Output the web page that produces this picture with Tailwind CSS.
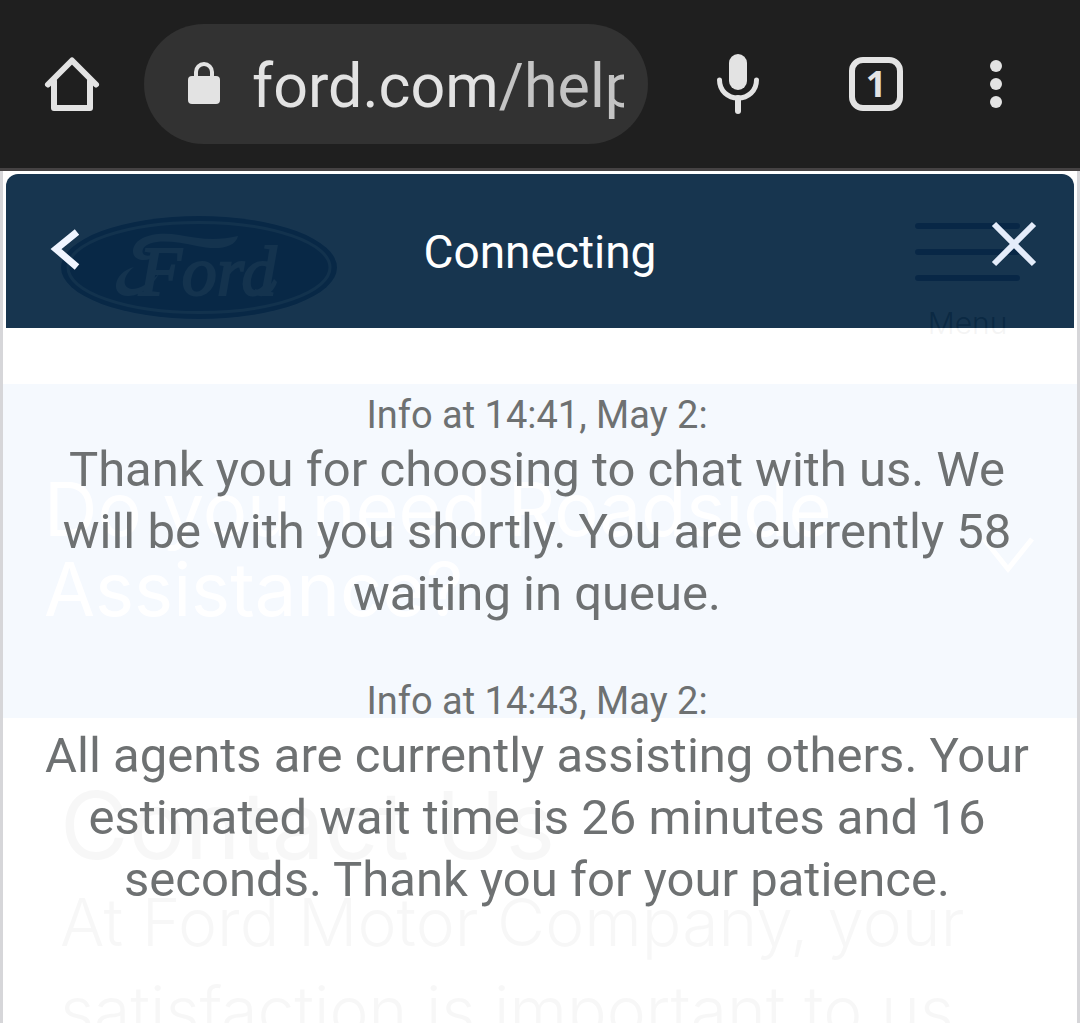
<!DOCTYPE html>
<html lang="en">
<head>
  <meta charset="UTF-8">
  <meta name="viewport" content="width=device-width, initial-scale=1.0">
  <title>Ford Help - Chat</title>
  <script src="https://cdn.jsdelivr.net/npm/@tailwindcss/browser@4"></script>
</head>
<body class="h-screen flex flex-col overflow-hidden bg-white font-['Roboto',sans-serif]">

<!-- Browser Bar -->
<header class="shrink-0 flex items-center h-[171px] pl-9 pr-15 bg-[#1f1f1f] border-b-3 border-[#454243] text-[#e3e3e3]">
  <button aria-label="Home" class="shrink-0">
    <svg class="size-18" viewBox="0 0 72 72" fill="none" stroke="currentColor" stroke-width="6" stroke-linecap="round" stroke-linejoin="round">
      <path d="M12 36.500L36 12.500L60 36.500"/>
      <path d="M18 33V60H54V33"/>
    </svg>
  </button>
  <div class="flex-1 min-w-0 flex items-center h-[120px] ml-9 pl-[44px] pr-6 rounded-full bg-[#323232]">
    <svg class="shrink-0 w-8 h-[44px]" viewBox="0 0 32 44" fill="none">
      <path d="M8 17V10A8 8 0 0 1 24 10V17" stroke="currentColor" stroke-width="4"/>
      <rect y="14" width="32" height="28" rx="4" fill="currentColor"/>
    </svg>
    <div class="flex-1 min-w-0 ml-8 pt-1 overflow-hidden whitespace-nowrap text-[61px] leading-[84px]">ford.com<span class="text-[#c4c4c4]">/help</span></div>
  </div>
  <button aria-label="Voice search" class="shrink-0 ml-[54px]">
    <svg class="size-18" viewBox="0 0 72 72" fill="none" stroke="currentColor" stroke-linecap="round">
      <rect x="27" y="6" width="18" height="36" rx="9" fill="currentColor" stroke="none"/>
      <path d="M17.500 32C17.500 43 26 50 36 50C46 50 54.500 43 54.500 32" stroke-width="5"/>
      <path d="M36 50V63" stroke-width="6"/>
    </svg>
  </button>
  <button aria-label="Open tabs" class="shrink-0 flex items-center justify-center size-[54px] ml-[75px] border-6 border-current rounded-[14px] font-['Open_Sans',sans-serif] text-[36px] leading-9 font-bold">1</button>
  <button aria-label="More options" class="shrink-0 ml-[69px]">
    <svg class="w-12 h-18" viewBox="0 0 48 72" fill="currentColor">
      <circle cx="24" cy="18" r="6"/>
      <circle cx="24" cy="36" r="6"/>
      <circle cx="24" cy="54" r="6"/>
    </svg>
  </button>
</header>

<main class="relative flex-1 min-h-0 overflow-hidden">

  <!-- Ford Help Page -->
  <div class="font-['Inter',sans-serif] font-light">
    <div class="flex items-start justify-between h-[213px] pt-[45px] pl-[61px] pr-[60px]">
      <svg class="w-[276px] h-[103px]" viewBox="0 0 276 103" role="img" aria-label="Ford">
        <ellipse cx="138" cy="51.500" rx="138" ry="51.500" fill="#00266b"/>
        <ellipse cx="138" cy="51.500" rx="131" ry="45" fill="none" stroke="#a9c0d8" stroke-width="3"/>
        <g fill="#c2d6e8">
          <path d="M98 35C92 47 72 47 72 35C73 20 96 15 118 19C138 23 157 25 177 20C174 33 154 34 136 30C114 25 88 22 82 33C79 41 90 42 98 35Z"/>
          <path d="M73 51C51 57 49 81 68 80C82 79 92 68 98 58C88 67 79 73 71 73C60 72 62 59 73 51Z"/>
          <path d="M194 73C202 77 209 71 213 63L216 66C213 76 204 83 195 79Z"/>
        </g>
        <text x="78" y="79" font-family="Liberation Serif, serif" font-style="italic" font-size="70" fill="#c2d6e8" stroke="#c2d6e8" stroke-width="2">Ford</text>
      </svg>
      <button class="flex flex-col items-center pt-[7px] text-[30px] leading-9 text-[#333]">
        <svg class="w-[105px] h-[58px] mb-6" viewBox="0 0 105 58" fill="none" stroke="#001c6b" stroke-width="6" stroke-linecap="round">
          <path d="M3 3H102M3 29H102M3 55H102"/>
        </svg>
        Menu
      </button>
    </div>
    <div class="flex items-center justify-between h-[334px] pb-1 pl-11 pr-[46px] bg-[#3880e8] text-white">
      <h2 class="text-[74px] leading-20 font-normal">Do you need Roadside<br>Assistance?</h2>
      <svg class="shrink-0 w-[52px] h-12" viewBox="0 0 52 48" fill="none" stroke="currentColor" stroke-width="5">
        <path d="M2 14L26 44L50 14"/>
      </svg>
    </div>
    <div class="pl-[60px] whitespace-nowrap text-[#6b6b6b]">
      <h1 class="pt-[54px] text-[94px] leading-[106px] font-normal">Contact Us</h1>
      <p class="text-[66px] leading-[88px]">At Ford Motor Company, your<br>satisfaction is important to us</p>
    </div>
  </div>

  <!-- Chat Window -->
  <section class="absolute inset-0 flex flex-col border-x-3 border-[#d6d6d9]">
    <div class="shrink-0 bg-white h-[3px]"></div>
    <div class="shrink-0 grid grid-cols-[120px_1fr_120px] items-center justify-items-center h-[154px] mx-[3px] rounded-t-xl bg-[#092844]/94 text-white">
      <button aria-label="Back">
        <svg class="w-12 h-18" viewBox="0 0 48 72" fill="none" stroke="#f0f5ff" stroke-width="7">
          <path d="M35 17L14 34L35 52"/>
        </svg>
      </button>
      <h2 class="pt-0.5 text-[46px] leading-14">Connecting</h2>
      <button aria-label="Close">
        <svg class="size-18" viewBox="0 0 72 72" fill="none" stroke="#e4ecfa" stroke-width="6">
          <path d="M16 9L56 49M56 9L16 49"/>
        </svg>
      </button>
    </div>
    <div class="flex-1 flex flex-col gap-[52px] pt-[63px] pl-10 pr-[46px] bg-white/95 text-center text-[49px] leading-[62px] text-[#6e7172]">
      <article>
        <p class="text-[38px] leading-12">Info at 14:41, May 2:</p>
        <p>Thank you for choosing to chat with us. We will be with you shortly. You are currently 58 waiting in queue.</p>
      </article>
      <article>
        <p class="text-[38px] leading-12">Info at 14:43, May 2:</p>
        <p>All agents are currently assisting others. Your estimated wait time is 26 minutes and 16 seconds. Thank you for your patience.</p>
      </article>
    </div>
  </section>

</main>

</body>
</html>
